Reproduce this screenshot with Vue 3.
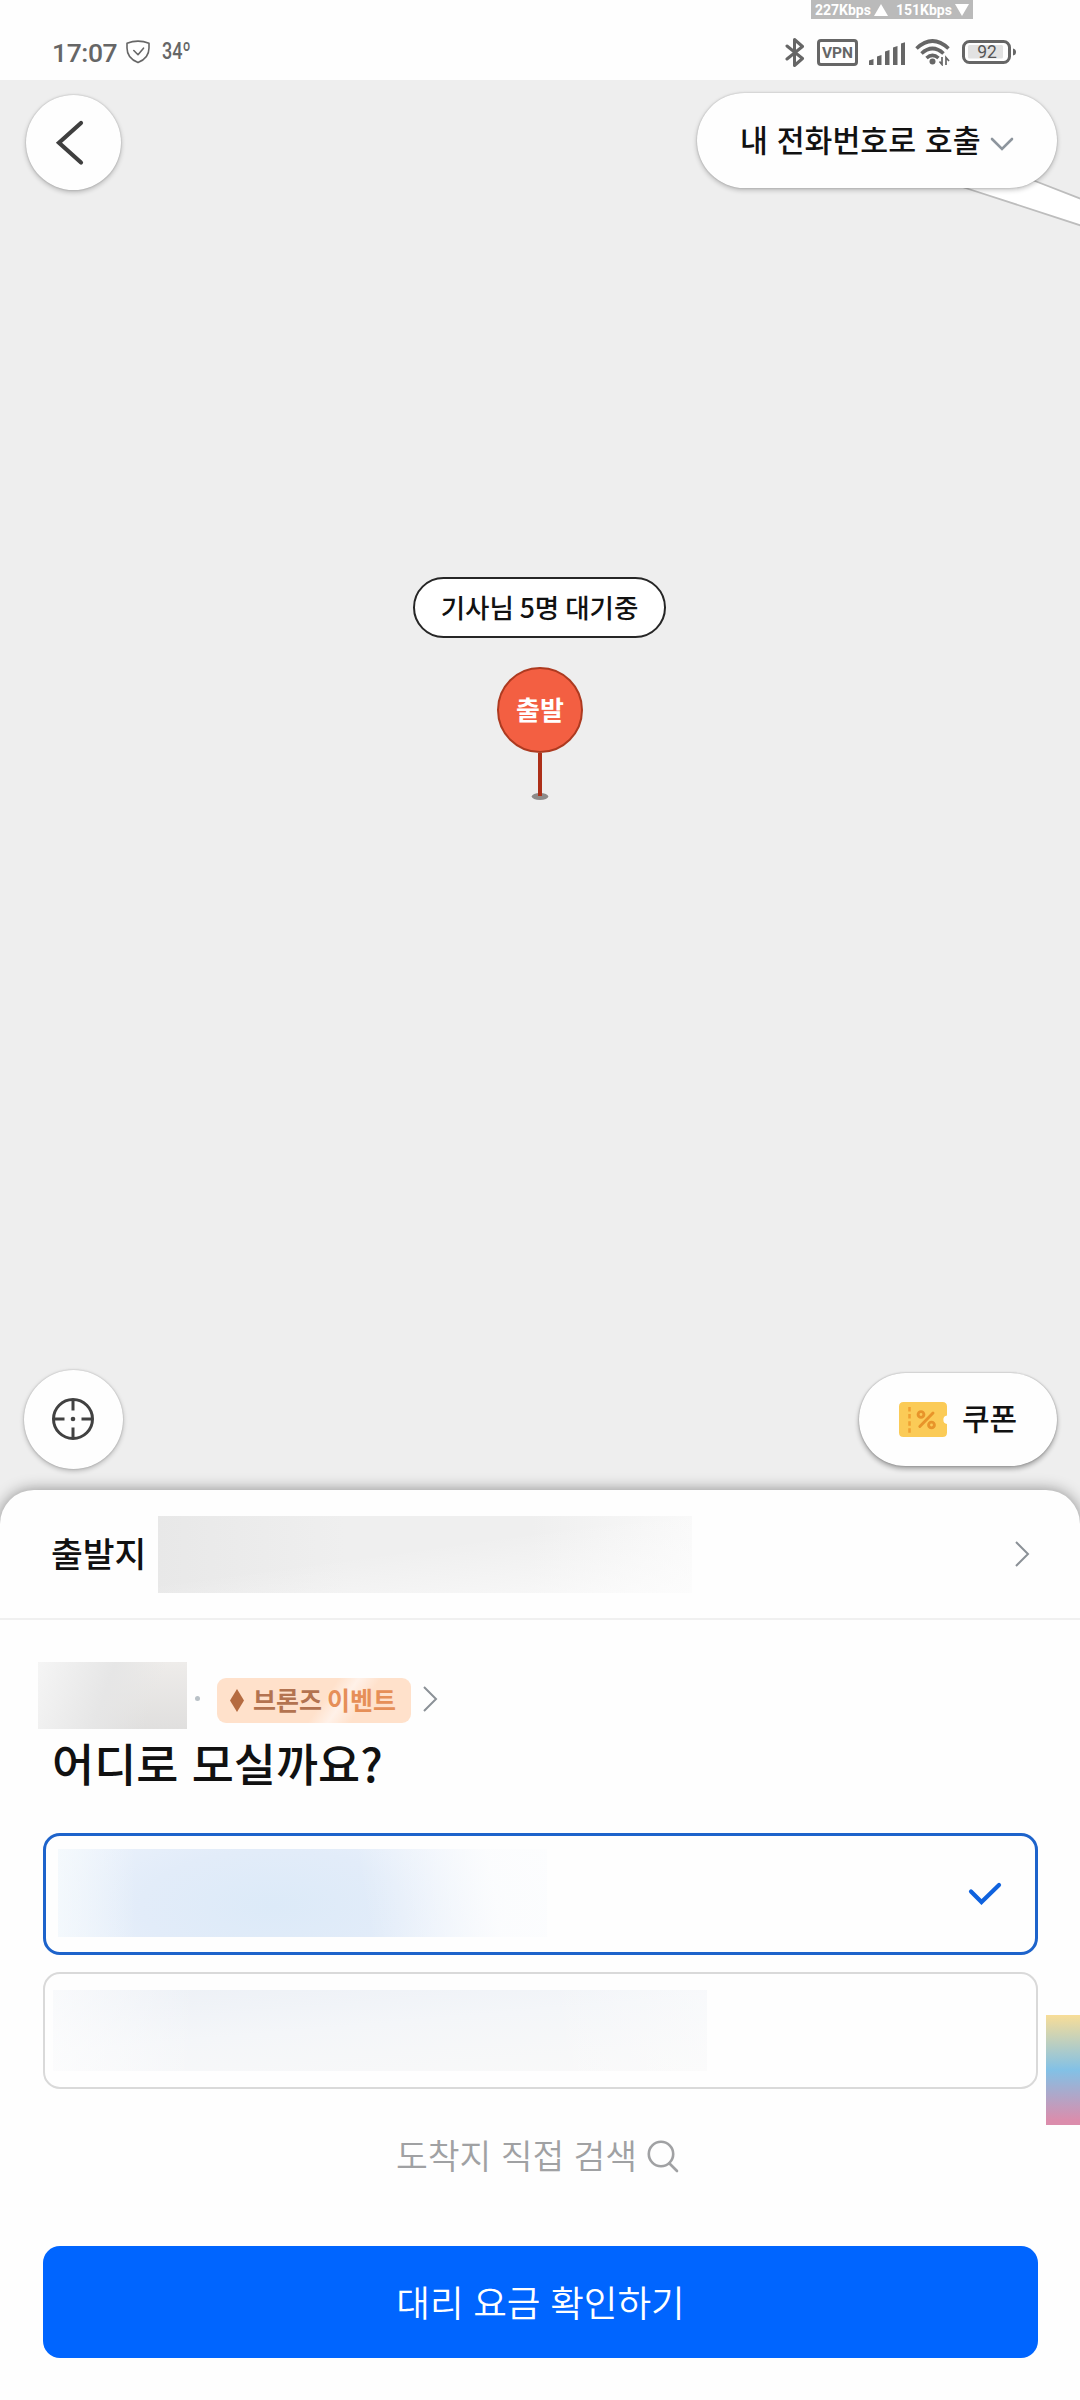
<script setup>
const signalBars = [
  { x: 0, h: 6 },
  { x: 8, h: 10 },
  { x: 16, h: 15 },
  { x: 24, h: 19 },
  { x: 32, h: 23 },
]
</script>

<template>
  <div class="screen">
    <header class="status">
      <div class="net">
        <span>227Kbps</span>
        <svg width="14" height="12" viewBox="0 0 14 12"><path d="M7 0L14 12H0Z" fill="#fff" /></svg>
        <span class="down">151Kbps</span>
        <svg width="14" height="12" viewBox="0 0 14 12"><path d="M0 0H14L7 12Z" fill="#fff" /></svg>
      </div>
      <div class="status-left">
        <span class="time">17:07</span>
        <svg class="shield" width="24" height="24" viewBox="0 0 24 24" fill="none" stroke="#666" stroke-width="1.6" stroke-linejoin="round" stroke-linecap="round">
          <path d="M1 3.2Q12 -1 23 3.2V8C23 15 18.5 20 12 22.6C5.500 20 1 15 1 8Z" />
          <path d="M7.800 10.500L12 14.700L17.500 8.200" />
        </svg>
        <span class="temp">34º</span>
      </div>
      <div class="status-right">
        <svg class="bt" width="20" height="31" viewBox="0 0 20 31" fill="none" stroke="#666" stroke-width="3" stroke-linejoin="round" stroke-linecap="round">
          <path d="M2 9L17.500 21.500L9.500 28.500V2.500L17.500 9.500L2 22" />
        </svg>
        <span class="vpn">VPN</span>
        <svg class="signal" width="36" height="23" viewBox="0 0 36 23">
          <path v-for="b in signalBars" :key="b.x" :d="`M${b.x} 23V${24.500 - b.h}L${b.x + 4.5} ${23 - b.h}V23Z`" fill="#666" />
        </svg>
        <svg class="wifi" width="36" height="27" viewBox="0 0 36 27" fill="none" stroke="#666" stroke-width="3.600">
          <path d="M1.500 9.500Q17.500 -5.500 33.500 9.500" />
          <path d="M6.500 14.500Q17.500 4.500 28.500 14.500" />
          <path d="M11.500 19Q17.500 13.800 23.500 19" />
          <circle cx="17.500" cy="22.500" r="3" fill="#666" stroke="none" />
          <path d="M27 18V25.500L24.500 22.500M31 26V18.500L34 22" stroke-width="1.700" />
        </svg>
        <svg class="battery" width="54" height="24" viewBox="0 0 54 24">
          <rect x="1.500" y="1.500" width="46" height="21" rx="6" fill="#fff" stroke="#666" stroke-width="3" />
          <rect x="6" y="5" width="35" height="13.500" rx="1.500" fill="#e2e2e2" />
          <path d="M51 8.500Q54 9 54 12Q54 15 51 15.500Z" fill="#666" />
          <text x="25" y="18.300" text-anchor="middle" font-size="17.500" fill="#555">92</text>
        </svg>
      </div>
    </header>

    <main class="map">
      <svg class="road" width="420" height="150" viewBox="0 0 420 150">
        <path d="M106 80L280 100L307 108.500L424 146.500V120L375 101L306 78Z" fill="#fff" stroke="#bdbdbd" stroke-width="1.800" />
      </svg>
      <div class="row top-row">
        <button class="round back">
          <svg width="30" height="46" viewBox="0 0 30 46" fill="none" stroke="#3f3f3f" stroke-width="4.200" stroke-linecap="round">
            <path d="M26 3L4 22.800L26 42.500" />
          </svg>
        </button>
        <button class="pill caller">
          <span class="caller-text">내 전화번호로 호출</span>
          <svg width="24" height="15" viewBox="0 0 24 15" fill="none" stroke="#8d959d" stroke-width="2.600" stroke-linecap="round">
            <path d="M2 2L12 12L22 2" />
          </svg>
        </button>
      </div>

      <div class="pin-area">
        <div class="waiting"><span>기사님 5명 대기중</span></div>
        <div class="pin"><span>출발</span></div>
        <svg class="stem" width="20" height="48" viewBox="0 0 20 48">
          <ellipse cx="10" cy="43.500" rx="8.300" ry="3.500" fill="#8d8b8a" />
          <path d="M10 0V43" stroke="#ad2f18" stroke-width="4" />
        </svg>
      </div>

      <div class="row bottom-row">
        <button class="round locate">
          <svg width="44" height="44" viewBox="0 0 44 44" fill="none" stroke="#414141" stroke-width="3">
            <circle cx="22" cy="22" r="19.500" />
            <path d="M22 2V13.500M22 30.500V42M2 22H13.500M30.500 22H42" />
            <circle cx="22" cy="22" r="2.300" fill="#414141" stroke="none" />
          </svg>
        </button>
        <button class="pill coupon">
          <svg width="48" height="35" viewBox="0 0 48 35">
            <path d="M4.500 0H43.500Q48 0 48 4.500V13.500A4.300 4.300 0 0 0 48 22V30.500Q48 35 43.500 35H4.500Q0 35 0 30.500V4.500Q0 0 4.500 0Z" fill="#fbcb57" />
            <path d="M10.500 5V31" stroke="#f0a032" stroke-width="2.500" stroke-dasharray="4.500 2.600" />
            <g fill="none" stroke="#e8942a" stroke-width="2.900" stroke-linecap="round">
              <circle cx="22" cy="12.500" r="2.900" />
              <circle cx="32.500" cy="23" r="2.900" />
              <path d="M34 11L20.800 24.500" />
            </g>
          </svg>
          <span>쿠폰</span>
        </button>
      </div>
    </main>

    <section class="sheet">
      <div class="origin">
        <span class="origin-label">출발지</span>
        <div class="mask mask-origin"></div>
        <svg width="18" height="28" viewBox="0 0 18 28" fill="none" stroke="#8b9197" stroke-width="2">
          <path d="M3 2L15 14L3 26" />
        </svg>
      </div>

      <div class="member">
        <div class="mask mask-name"></div>
        <i class="dot"></i>
        <div class="badge">
          <svg width="14" height="23" viewBox="0 0 14 23"><path d="M7 0L14 11.500L7 23L0 11.500Z" fill="#b56b40" /></svg>
          <span class="bronze">브론즈</span>
          <span class="event">이벤트</span>
        </div>
        <svg class="chev" width="18" height="28" viewBox="0 0 18 28" fill="none" stroke="#8b9197" stroke-width="2">
          <path d="M3 2L15 14L3 26" />
        </svg>
      </div>
      <h1>어디로 모실까요?</h1>

      <div class="option selected">
        <div class="mask mask-a"></div>
        <svg width="36" height="26" viewBox="0 0 36 26" fill="none" stroke="#0f62de" stroke-width="4.200" stroke-linecap="round">
          <path d="M4 9.500L14.500 20L32 3" />
        </svg>
      </div>
      <div class="option">
        <div class="mask mask-b"></div>
      </div>

      <div class="search">
        <span>도착지 직접 검색</span>
        <svg width="32" height="34" viewBox="0 0 32 34" fill="none" stroke="#a0a1a3" stroke-width="2.600" stroke-linecap="round">
          <circle cx="14" cy="14" r="12.200" />
          <path d="M22.500 23.500L30 31" />
        </svg>
      </div>
      <button class="submit"><span>대리 요금 확인하기</span></button>
      <div class="edge-strip"></div>
    </section>
  </div>
</template>

<style>
body {
  margin: 0;
  background: #fefefe;
}
</style>

<style scoped>
.screen {
  width: 1080px;
  height: 2400px;
  overflow: hidden;
  display: flex;
  flex-direction: column;
  font-family: "Noto Sans CJK KR", sans-serif;
  color: #111;
  background: #fefefe;
}
svg { display: block; flex: none; }
button { border: 0; padding: 0; font: inherit; color: inherit; }
span { white-space: nowrap; }

.status {
  position: relative;
  height: 80px;
  flex: none;
  box-sizing: border-box;
  padding: 24px 64px 0 53px;
  display: flex;
  justify-content: space-between;
  font-family: Roboto, sans-serif;
  color: #666;
}
.net {
  position: absolute;
  left: 811px;
  top: 0;
  width: 162px;
  height: 19px;
  box-sizing: border-box;
  padding-left: 4px;
  display: flex;
  align-items: center;
  background: #bababa;
  color: #fff;
  font-size: 14px;
  line-height: 20px;
  font-weight: 700;
}
.net svg { margin-left: 3px; }
.net .down { margin-left: 8px; }
.status-left, .status-right { display: flex; align-items: center; height: 56px; }
.time { font-size: 26.500px; font-weight: 500; line-height: 58px; height: 56px; width: 73px; letter-spacing: -.4px; text-indent: -1px; }
.temp {
  margin-left: 12px;
  font-size: 24px;
  font-weight: 500;
  line-height: 54px;
  height: 56px;
  transform: scaleX(.75);
  transform-origin: left;
  width: 30px;
}
.vpn {
  box-sizing: border-box;
  width: 41px;
  height: 27px;
  border: 3px solid #666;
  border-radius: 4px;
  margin-left: 12px;
  font-size: 15.500px;
  font-weight: 700;
  line-height: 22px;
  text-align: center;
}
.signal { margin: 2px 0 0 11px; }
.wifi { margin-left: 10px; }
.battery { margin-left: 11px; font-family: Roboto, sans-serif; }

.map {
  position: relative;
  height: 1450px;
  margin-bottom: -40px;
  padding-bottom: 40px;
  box-sizing: border-box;
  flex: none;
  background: #eee;
  display: flex;
  flex-direction: column;
  justify-content: space-between;
}
.road { position: absolute; right: 0; top: 0; }
.row { display: flex; justify-content: space-between; position: relative; }
.top-row { padding: 13px 23px 0 25.500px; }
.bottom-row { padding: 0 23px 21.500px 23.500px; align-items: center; }
.round, .pill {
  display: flex;
  align-items: center;
  background: #fefefe;
  box-shadow: 0 2px 5px rgba(0, 0, 0, .24), 0 0 2px rgba(0, 0, 0, .22);
}
.round { justify-content: center; border-radius: 50%; }
.back { width: 95px; height: 95px; margin-top: 2px; }
.back svg { margin-right: 7px; }
.caller { width: 360px; height: 95px; border-radius: 48px; padding-left: 43px; box-sizing: border-box; justify-content: flex-start; }
.caller-text { font-size: 30.300px; font-weight: 500; line-height: 44px; margin-top: -3px; width: 249px; text-align: left; word-spacing: 2px; }
.caller svg { margin: 7px 0 0 1px; }

.pin-area {
  position: absolute;
  left: 0;
  right: 0;
  top: 496px;
  display: flex;
  flex-direction: column;
  align-items: center;
}
.waiting {
  box-sizing: border-box;
  width: 253px;
  height: 61px;
  margin: .6px 1px 0 0;
  border: 2px solid #262626;
  border-radius: 31px;
  background: #fff;
  font-size: 26.500px;
  font-weight: 500;
  line-height: 56px;
  text-align: center;
}
.pin {
  box-sizing: border-box;
  width: 86px;
  height: 86px;
  margin-top: 29.900px;
  border: 2px solid #ad3a20;
  border-radius: 50%;
  background: #f35f42;
  color: #fff;
  font-size: 26px;
  font-weight: 700;
  line-height: 80px;
  text-align: center;
}
.locate { width: 99px; height: 99px; }
.coupon { width: 198px; height: 93px; border-radius: 47px; padding-left: 40px; box-sizing: border-box; box-shadow: 0 3px 5px rgba(0, 0, 0, .32), 0 0 2px rgba(0, 0, 0, .3); }
.coupon span { font-size: 30px; font-weight: 500; margin: -4px 0 0 15px; line-height: 44px; }

.sheet {
  position: relative;
  height: 910px;
  flex: none;
  background: #fefefe;
  border-radius: 34px 34px 0 0;
  box-shadow: 0 0 15px rgba(0, 0, 0, .42);
  display: flex;
  flex-direction: column;
}
.origin {
  height: 130px;
  box-sizing: border-box;
  border-bottom: 2px solid #f0f0f0;
  display: flex;
  align-items: center;
  padding: 0 49px 0 51px;
}
.origin-label { font-size: 34.600px; font-weight: 500; line-height: 50px; margin-top: -4px; width: 107px; }
.origin > svg { margin-left: auto; }
.mask-origin {
  width: 534px;
  height: 77px;
  background: linear-gradient(172deg, transparent 45%, rgba(253, 253, 253, .75)), linear-gradient(90deg, #e8e8e8, #efefef 35%, #efefef 70%, #f9f9f9);
}
.member { display: flex; align-items: center; height: 67px; margin: 42px 0 0 38px; }
.mask-name { width: 149px; height: 67px; background: linear-gradient(110deg, #f5f5f5, #e6e6e6 45%, transparent 75%), linear-gradient(180deg, #eeecea, #e0dfde); }
.dot { width: 5px; height: 5px; border-radius: 50%; background: #b9c1c7; margin: 6px 0 0 8px; }
.badge {
  box-sizing: border-box;
  width: 194px;
  height: 45px;
  margin: 9px 0 0 17px;
  padding-left: 13px;
  display: flex;
  align-items: center;
  border-radius: 9px;
  background: linear-gradient(125deg, #ffe1cb 54%, #fff1e8 63%, #ffe1cb 73%);
  font-size: 25px;
  font-weight: 700;
  line-height: 36px;
}
.badge span { margin-top: -2px; }
.bronze { color: #b37350; margin-left: 9px; }
.event { color: #e68f58; margin-left: 5px; }
.chev { margin: 7px 0 0 10px; }
h1 { margin: 0 0 0 52px; font-size: 45.800px; font-weight: 500; line-height: 66px; height: 66px; word-spacing: 3px; }

.option {
  box-sizing: border-box;
  width: 995px;
  height: 117px;
  margin: 17px 0 0 43px;
  border: 2px solid #d9d9d9;
  border-radius: 17px;
  display: flex;
  align-items: center;
}
.option.selected { height: 122px; margin-top: 38px; border: 3px solid #1d63cb; }
.selected svg { margin: 2px 32px 0 auto; }
.mask-a {
  width: 489px;
  height: 88px;
  margin: 0 0 2px 12px;
  background: linear-gradient(90deg, rgba(248, 252, 253, .7), transparent 16%), linear-gradient(80deg, transparent 62%, rgba(254, 254, 254, .85) 88%), radial-gradient(ellipse 330px 140px at 44% 65%, #dceaf8 0%, #e2ecf9 40%, #eaf1fb 70%, #f4f8fd 100%);
}
.mask-b {
  width: 654px;
  height: 81px;
  margin-left: 8px;
  background: linear-gradient(90deg, rgba(254, 254, 254, .7), transparent 22%, transparent 75%, rgba(254, 254, 254, .4)), linear-gradient(175deg, #ecf0f6, #f4f6f9 45%, #f9f9f9);
}
.search {
  height: 60px;
  margin-top: 35px;
  display: flex;
  align-items: center;
  padding-left: 396px;
  color: #a0a1a3;
  font-size: 34.600px;
  font-weight: 350;
  line-height: 60px;
  word-spacing: 1.500px;
}
.search svg { margin: 5px 0 0 10px; }
.submit {
  width: 995px;
  height: 112px;
  margin: 62px 0 0 43px;
  border-radius: 17px;
  background: #0065ff;
  color: #fff;
  font-size: 36.600px;
  font-weight: 350;
  line-height: 112px;
  text-align: center;
  word-spacing: 1.500px;
}
.edge-strip {
  position: absolute;
  right: 0;
  top: 525px;
  width: 34px;
  height: 110px;
  background: linear-gradient(180deg, #f8dd98, #82c1e6 50%, #db8dac 96%);
}
</style>
